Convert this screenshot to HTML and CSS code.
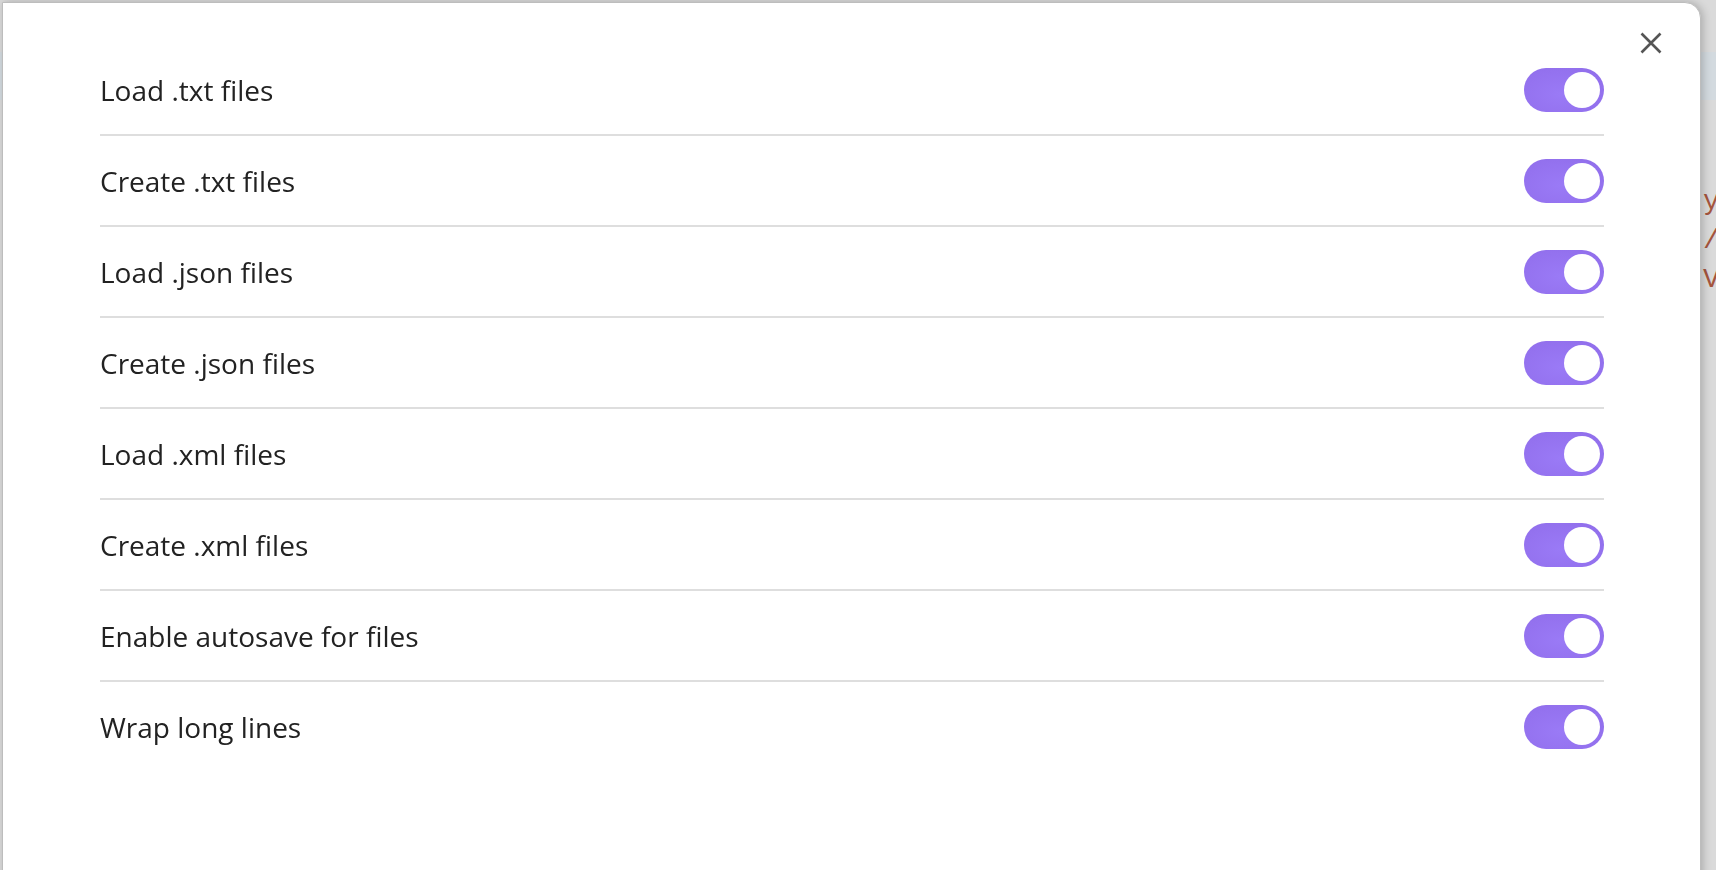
FILE: index.html
```html
<!DOCTYPE html>
<html lang="en">
<head>
<meta charset="utf-8">
<title>Settings</title>
<link rel="stylesheet" href="styles.css">
</head>
<body>
<div class="page">
  <div class="page-band"></div>
  <pre class="page-code">y
/
V</pre>
</div>
<div class="modal">
  <button class="close" aria-label="Close">
    <svg width="22" height="22" viewBox="0 0 22 22"><path d="M1.5 1.5 L20.5 20.5 M20.5 1.5 L1.5 20.5" stroke="#555" stroke-width="2.6" fill="none" stroke-linecap="butt"/></svg>
  </button>
  <div class="settings">
    <div class="row"><span class="label">Load .txt files</span><span class="toggle"><span class="knob"></span></span></div>
    <div class="row"><span class="label">Create .txt files</span><span class="toggle"><span class="knob"></span></span></div>
    <div class="row"><span class="label">Load .json files</span><span class="toggle"><span class="knob"></span></span></div>
    <div class="row"><span class="label">Create .json files</span><span class="toggle"><span class="knob"></span></span></div>
    <div class="row"><span class="label">Load .xml files</span><span class="toggle"><span class="knob"></span></span></div>
    <div class="row"><span class="label">Create .xml files</span><span class="toggle"><span class="knob"></span></span></div>
    <div class="row"><span class="label">Enable autosave for files</span><span class="toggle"><span class="knob"></span></span></div>
    <div class="row"><span class="label">Wrap long lines</span><span class="toggle"><span class="knob"></span></span></div>
  </div>
</div>
</body>
</html>
```
FILE: styles.css
```css
html, body {
  margin: 0;
  padding: 0;
  height: 100%;
  overflow: hidden;
}
body {
  background: #dadada;
  font-family: "Open Sans", "Noto Sans", sans-serif;
}
.page {
  height: 100%;
  padding-top: 52px;
  box-sizing: border-box;
}
.page-band {
  height: 48px;
  background: #d3dadf;
}
.page-code {
  margin: 82px 0 0 1703px;
  font-family: "Liberation Mono", monospace;
  font-size: 28px;
  line-height: 39px;
  color: #a5553e;
}
.modal {
  position: fixed;
  left: 2px;
  top: 2px;
  right: 15px;
  bottom: -30px;
  background: #fff;
  border: 1px solid #bdbdbd;
  border-top-right-radius: 16px;
  box-shadow: 2px 0 8px rgba(0, 0, 0, 0.22);
  padding: 42px 96px 0 97px;
}
.close {
  position: absolute;
  top: 27px;
  right: 36px;
  width: 26px;
  height: 26px;
  padding: 2px;
  border: 0;
  background: none;
  display: flex;
  align-items: center;
  justify-content: center;
}
.settings {
  display: flex;
  flex-direction: column;
}
.row {
  height: 89px;
  display: flex;
  align-items: center;
  justify-content: space-between;
  border-bottom: 2px solid #dedede;
}
.row:last-child {
  border-bottom: 0;
}
.label {
  font-size: 28px;
  color: #222;
  padding-top: 1px;
}
.toggle {
  width: 80px;
  height: 44px;
  border-radius: 22px;
  background: radial-gradient(ellipse at 45% 60%, #9a7af6 0%, #9472ef 60%, #8f6de9 100%);
  box-sizing: border-box;
  display: flex;
  align-items: center;
  justify-content: flex-end;
  padding-right: 4px;
}
.knob {
  width: 36px;
  height: 36px;
  border-radius: 50%;
  background: #fff;
}
```
